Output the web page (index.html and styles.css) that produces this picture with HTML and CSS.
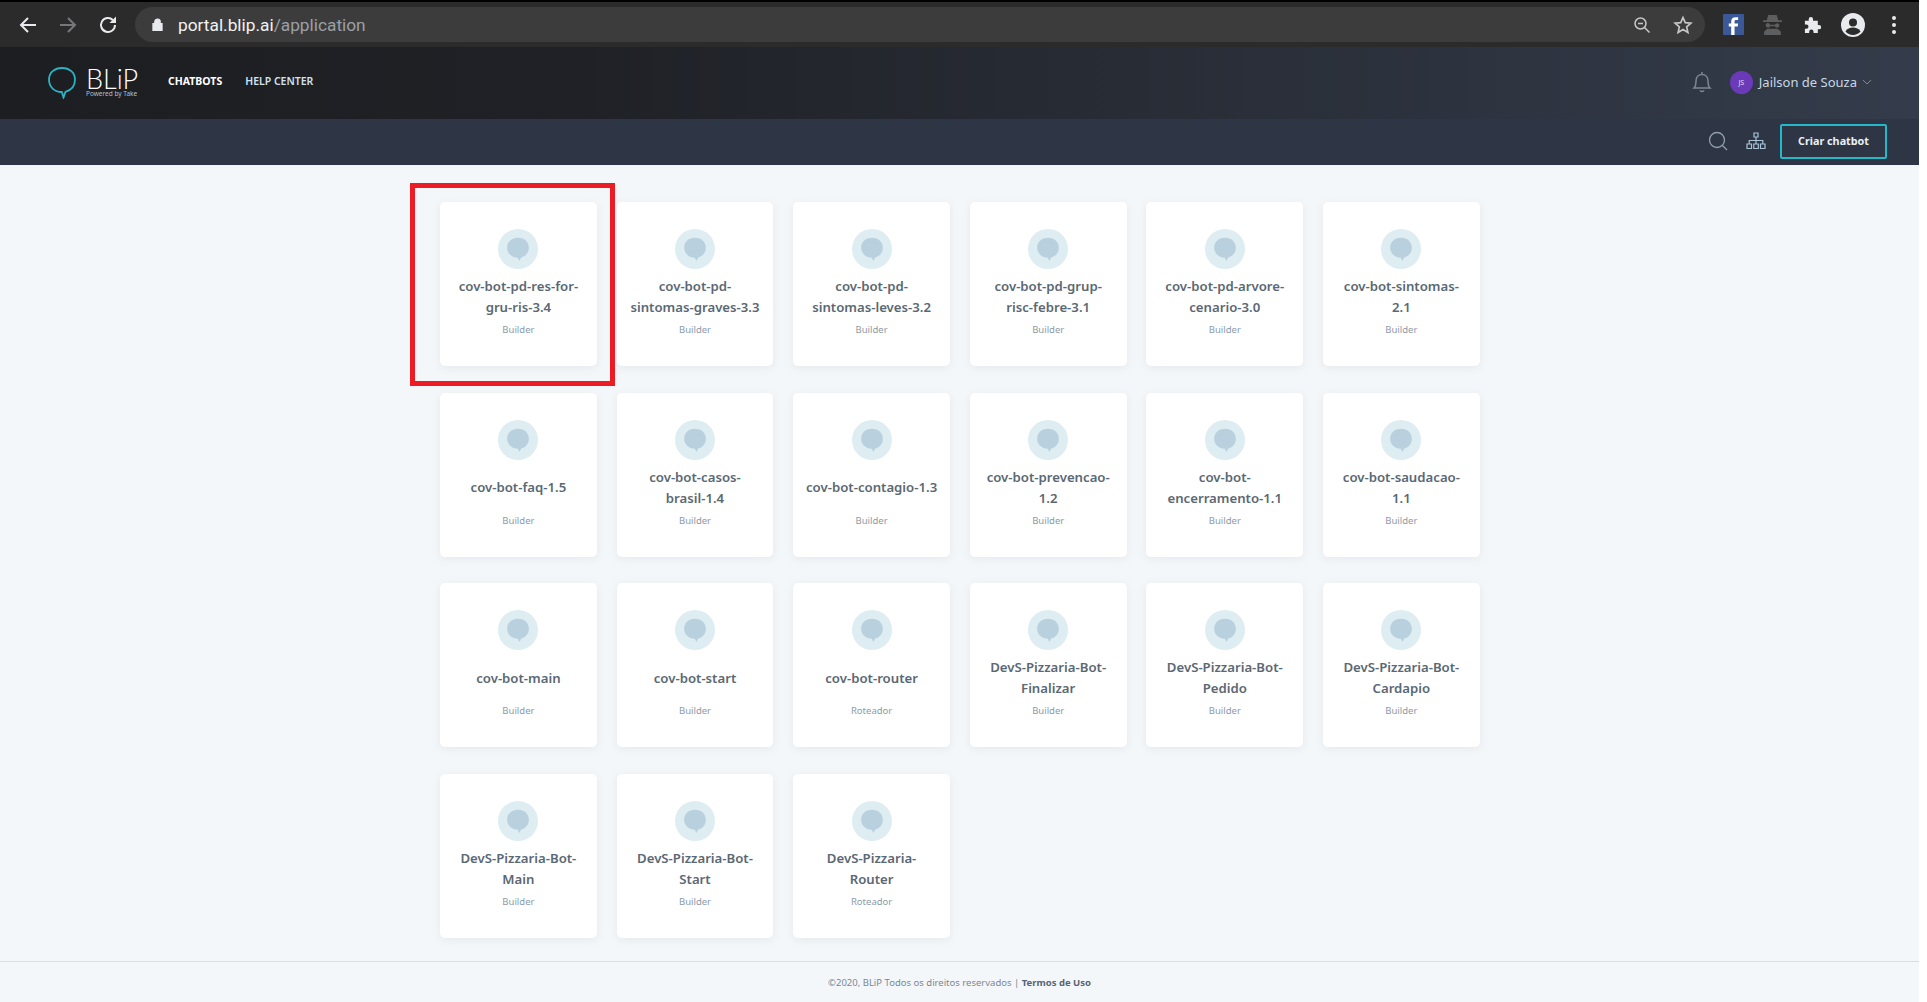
FILE: index.html
```html
<!DOCTYPE html>
<html lang="en">
<head>
    <meta charset="UTF-8">
    <title>BLiP</title>
    <link rel="stylesheet" href="styles.css">
</head>
<body>
<svg class="defs" width="0" height="0">
    <symbol id="bubble" viewBox="0 0 24 24">
        <path d="M12 1.500c5.800 0 10 3.600 10 9.300 0 4.600-2.800 7.800-7 9l-1.800 3.200-1.400-2.900C6.300 19.800 2 16.200 2 10.800 2 5.100 6.200 1.500 12 1.500z" fill="#b9d0df"/>
    </symbol>
</svg>

<div class="page">
    <div class="browser">
        <div class="browser-nav">
            <svg class="bicon" viewBox="0 0 24 24"><path d="M20 12H5M12 5l-7 7 7 7" fill="none" stroke="#e8eaed" stroke-width="2"/></svg>
            <svg class="bicon" viewBox="0 0 24 24"><path d="M4 12h15M12 5l7 7-7 7" fill="none" stroke="#75777a" stroke-width="2"/></svg>
            <svg class="bicon" viewBox="0 0 24 24"><path d="M19 12a7 7 0 1 1-2.200-5.100" fill="none" stroke="#e8eaed" stroke-width="2"/><path d="M20 3.500V10h-6.500z" fill="#e8eaed"/></svg>
        </div>
        <div class="omnibox">
            <div class="url">
                <svg class="lock" viewBox="0 0 12 14"><path d="M1 6h10v8H1zM3 6V4a3 3 0 0 1 6 0v2" fill="#e8eaed" stroke="#e8eaed" stroke-width="1.200"/></svg>
                <span class="host">portal.blip.ai</span><span class="path">/application</span>
            </div>
            <div class="omni-icons">
                <svg class="small-icon" viewBox="0 0 18 18"><circle cx="7.500" cy="7.500" r="5.500" fill="none" stroke="#c4c7c5" stroke-width="1.500"/><path d="M5 7.500h5M11.500 11.500l5 5" stroke="#c4c7c5" stroke-width="1.500"/></svg>
                <svg class="small-icon star" viewBox="0 0 24 24"><path d="M12 3l2.700 6.200 6.800.6-5.100 4.500 1.500 6.700-5.900-3.500L6.100 21l1.500-6.700-5.100-4.500 6.800-.6z" fill="none" stroke="#c4c7c5" stroke-width="2"/></svg>
            </div>
        </div>
        <div class="extensions">
            <svg class="ext fb" viewBox="0 0 20 20"><rect width="20" height="20" rx="1" fill="#3b5998"/><path d="M11 20v-8h3l.4-3H11V7.200c0-.9.300-1.400 1.500-1.400h1.900V3.200c-.4 0-1.400-.2-2.500-.2-2.500 0-4.100 1.500-4.100 4v2H5.500v3h2.300v8z" fill="#fff"/></svg>
            <svg class="ext" viewBox="0 0 20 20"><path d="M6 1h8l1.500 5H19v1.500H1V6h3.500zM5.500 8.500a2.200 2.200 0 0 1 2.200 1.800h4.600a2.200 2.200 0 0 1 4.200 0v.7a2.200 2.200 0 0 1-4.200.700H7.700a2.200 2.200 0 0 1-4.200-.7v-.7a2.200 2.200 0 0 1 2-1.800zM5 14h10l3 3v3H2v-3z" fill="#5c5e60"/></svg>
            <svg class="ext puzzle" viewBox="0 0 20 20"><path d="M2 6h4V4.500a2.300 2.300 0 0 1 4.600 0V6h5v4.500h1.200a2.300 2.300 0 0 1 0 4.600h-1.200V19h-4.500v-1.500a2.300 2.300 0 0 0-4.600 0V19H2v-4.500h1.500a2.300 2.300 0 0 0 0-4.600H2z" fill="#e8eaed"/></svg>
            <svg class="ext avatar-icon" viewBox="0 0 24 24"><circle cx="12" cy="12" r="12" fill="#e8eaed"/><circle cx="12" cy="9.500" r="4" fill="#2b2b2b"/><path d="M4.500 18.500c1.500-3 4.500-4 7.500-4s6 1 7.500 4a10 10 0 0 1-15 0z" fill="#2b2b2b"/></svg>
            <svg class="ext dots" viewBox="0 0 6 20"><circle cx="3" cy="3" r="2" fill="#e8eaed"/><circle cx="3" cy="10" r="2" fill="#e8eaed"/><circle cx="3" cy="17" r="2" fill="#e8eaed"/></svg>
        </div>
    </div>

    <header class="topnav">
        <div class="logo">
            <svg class="logo-bubble" viewBox="0 0 28 32"><path d="M14 1c7.500 0 13 4.500 13 11.500 0 7-4.500 10.800-9.500 12.300L15.500 30.500 13.800 25C6.500 25 1 20 1 12.500 1 5.500 6.500 1 14 1z" fill="none" stroke="#2cb3c4" stroke-width="1.800"/></svg>
            <div class="logo-text">
                <span class="logo-name">BLiP</span>
                <span class="logo-sub">Powered by Take</span>
            </div>
        </div>
        <a class="navlink strong">CHATBOTS</a>
        <a class="navlink">HELP CENTER</a>
        <div class="user">
            <svg class="bell" viewBox="0 0 20 22"><path d="M2 17c2-2 2-4 2-7 0-4 2.500-6.500 6-6.500s6 2.500 6 6.500c0 3 0 5 2 7zM8 19.500c.5 1.200 3.500 1.200 4 0M10 1v2.500" fill="none" stroke="#7d8793" stroke-width="1.500"/></svg>
            <span class="initials">JS</span>
            <span class="username">Jailson de Souza</span>
            <svg class="caret" viewBox="0 0 10 6"><path d="M1 1l4 4 4-4" fill="none" stroke="#7d8793"/></svg>
        </div>
    </header>

    <div class="subbar">
        <svg class="search" viewBox="0 0 20 20"><circle cx="9" cy="9" r="7.500" fill="none" stroke="#8fa0ad" stroke-width="1.300"/><path d="M14.500 14.500l4.500 4.500" stroke="#8fa0ad" stroke-width="1.300"/></svg>
        <svg class="tree" viewBox="0 0 20 18"><path d="M8 1h4v4H8zM1 12h4.500v4.500H1zM7.800 12h4.500v4.500H7.800zM14.500 12H19v4.500h-4.500zM10 5v7M3.200 12V8.500h13.600V12" fill="none" stroke="#a9c4d6" stroke-width="1.200"/></svg>
        <button class="create">Criar chatbot</button>
    </div>

    <main class="content">
        <div class="grid">
            <div class="card"><svg class="badge" viewBox="0 0 24 24"><use href="#bubble"/></svg><h3>cov-bot-pd-res-for-gru-ris-3.4</h3><p>Builder</p><div class="highlight"></div></div>
            <div class="card"><svg class="badge" viewBox="0 0 24 24"><use href="#bubble"/></svg><h3>cov-bot-pd-sintomas-graves-3.3</h3><p>Builder</p></div>
            <div class="card"><svg class="badge" viewBox="0 0 24 24"><use href="#bubble"/></svg><h3>cov-bot-pd-sintomas-leves-3.2</h3><p>Builder</p></div>
            <div class="card"><svg class="badge" viewBox="0 0 24 24"><use href="#bubble"/></svg><h3>cov-bot-pd-grup-<br>risc-febre-3.1</h3><p>Builder</p></div>
            <div class="card"><svg class="badge" viewBox="0 0 24 24"><use href="#bubble"/></svg><h3>cov-bot-pd-arvore-<br>cenario-3.0</h3><p>Builder</p></div>
            <div class="card"><svg class="badge" viewBox="0 0 24 24"><use href="#bubble"/></svg><h3>cov-bot-sintomas-<br>2.1</h3><p>Builder</p></div>

            <div class="card"><svg class="badge" viewBox="0 0 24 24"><use href="#bubble"/></svg><h3>cov-bot-faq-1.5</h3><p>Builder</p></div>
            <div class="card"><svg class="badge" viewBox="0 0 24 24"><use href="#bubble"/></svg><h3>cov-bot-casos-<br>brasil-1.4</h3><p>Builder</p></div>
            <div class="card"><svg class="badge" viewBox="0 0 24 24"><use href="#bubble"/></svg><h3>cov-bot-contagio-1.3</h3><p>Builder</p></div>
            <div class="card"><svg class="badge" viewBox="0 0 24 24"><use href="#bubble"/></svg><h3>cov-bot-prevencao-<br>1.2</h3><p>Builder</p></div>
            <div class="card"><svg class="badge" viewBox="0 0 24 24"><use href="#bubble"/></svg><h3>cov-bot-<br>encerramento-1.1</h3><p>Builder</p></div>
            <div class="card"><svg class="badge" viewBox="0 0 24 24"><use href="#bubble"/></svg><h3>cov-bot-saudacao-<br>1.1</h3><p>Builder</p></div>

            <div class="card"><svg class="badge" viewBox="0 0 24 24"><use href="#bubble"/></svg><h3>cov-bot-main</h3><p>Builder</p></div>
            <div class="card"><svg class="badge" viewBox="0 0 24 24"><use href="#bubble"/></svg><h3>cov-bot-start</h3><p>Builder</p></div>
            <div class="card"><svg class="badge" viewBox="0 0 24 24"><use href="#bubble"/></svg><h3>cov-bot-router</h3><p>Roteador</p></div>
            <div class="card"><svg class="badge" viewBox="0 0 24 24"><use href="#bubble"/></svg><h3>DevS-Pizzaria-Bot-<br>Finalizar</h3><p>Builder</p></div>
            <div class="card"><svg class="badge" viewBox="0 0 24 24"><use href="#bubble"/></svg><h3>DevS-Pizzaria-Bot-<br>Pedido</h3><p>Builder</p></div>
            <div class="card"><svg class="badge" viewBox="0 0 24 24"><use href="#bubble"/></svg><h3>DevS-Pizzaria-Bot-<br>Cardapio</h3><p>Builder</p></div>

            <div class="card"><svg class="badge" viewBox="0 0 24 24"><use href="#bubble"/></svg><h3>DevS-Pizzaria-Bot-<br>Main</h3><p>Builder</p></div>
            <div class="card"><svg class="badge" viewBox="0 0 24 24"><use href="#bubble"/></svg><h3>DevS-Pizzaria-Bot-<br>Start</h3><p>Builder</p></div>
            <div class="card"><svg class="badge" viewBox="0 0 24 24"><use href="#bubble"/></svg><h3>DevS-Pizzaria-<br>Router</h3><p>Roteador</p></div>
        </div>
    </main>

    <footer class="footer">
        ©2020, BLiP Todos os direitos reservados | <strong>Termos de Uso</strong>
    </footer>
</div>
</body>
</html>
```

FILE: styles.css
```css
* {
    box-sizing: border-box;
}

html, body {
    height: 100%;
}

body {
    margin: 0;
    background-color: #fff;
    font-family: "Noto Sans", sans-serif;
    overflow: hidden;
}

.defs {
    position: absolute;
}

.page {
    display: flex;
    flex-direction: column;
    width: 1919px;
    height: 100%;
    background-color: #f4f7f9;
}

/* browser chrome */
.browser {
    flex: none;
    display: flex;
    align-items: center;
    height: 47px;
    border-top: 2px solid #000;
    background-color: #2b2b2b;
}

.browser-nav {
    display: flex;
    gap: 16px;
    width: 135px;
    padding-left: 16px;
}

.bicon {
    width: 24px;
    height: 24px;
}

.omnibox {
    display: flex;
    align-items: center;
    justify-content: space-between;
    width: 1570px;
    height: 35px;
    padding: 0 12px 0 17px;
    border-radius: 18px;
    background-color: #3c3c3c;
}

.url {
    display: flex;
    align-items: center;
    font-family: Roboto, sans-serif;
    font-size: 17.300px;
}

.lock {
    width: 11px;
    height: 13px;
    margin-right: 15px;
}

.host {
    color: #f1f3f4;
}

.path {
    color: #9aa0a6;
}

.omni-icons {
    display: flex;
    align-items: center;
    gap: 22px;
}

.small-icon {
    width: 18px;
    height: 18px;
}

.star {
    width: 20px;
    height: 20px;
}

.extensions {
    display: flex;
    align-items: center;
    gap: 20px;
    padding-left: 18px;
}

.ext {
    width: 21px;
    height: 21px;
}

.fb {
    margin-right: -2px;
}

.puzzle {
    width: 19px;
    height: 19px;
}

.avatar-icon {
    width: 24px;
    height: 24px;
    margin-left: -1px;
}

.dots {
    width: 6px;
    height: 20px;
    margin-left: 6px;
}

/* app nav */
.topnav {
    flex: none;
    display: flex;
    align-items: center;
    height: 72px;
    padding: 0 0 4px 48px;
    background: linear-gradient(90deg, #1c1e21 0%, #1f2126 30%, #343c4b 100%);
}

.logo {
    display: flex;
    align-items: center;
    gap: 10px;
    width: 120px;
    margin-top: 4px;
}

.logo-bubble {
    width: 28px;
    height: 32px;
}

.logo-text {
    display: flex;
    flex-direction: column;
    align-items: flex-start;
    color: #fff;
}

.logo-name {
    font-family: Lato, sans-serif;
    font-size: 27px;
    font-weight: 300;
    line-height: 22px;
}

.logo-sub {
    font-size: 6.500px;
    line-height: 8px;
    color: #b9bdc2;
}

.navlink {
    margin-right: 23px;
    font-size: 10.500px;
    font-weight: 600;
    color: #cfe3f2;
}

.navlink.strong {
    font-weight: 700;
    color: #fff;
}

.user {
    display: flex;
    align-items: center;
    margin-top: 2px;
    margin-left: auto;
    padding-right: 47px;
}

.bell {
    width: 20px;
    height: 22px;
    margin-right: 18px;
}

.initials {
    display: flex;
    align-items: center;
    justify-content: center;
    width: 23px;
    height: 23px;
    margin-right: 6px;
    border-radius: 50%;
    background-color: #6a3ab8;
    color: #e6dcf5;
    font-size: 7px;
}

.username {
    font-size: 13px;
    color: #c6d8e6;
}

.caret {
    width: 10px;
    height: 6px;
    margin-left: 5px;
}

.subbar {
    flex: none;
    display: flex;
    align-items: center;
    justify-content: flex-end;
    height: 46px;
    padding: 0 32px 2px 0;
    background-color: #2e3544;
}

.search {
    width: 20px;
    height: 20px;
    margin-right: 18px;
}

.tree {
    width: 20px;
    height: 18px;
    margin-right: 14px;
}

.create {
    width: 107px;
    height: 35px;
    padding: 0 0 2px;
    border: 2px solid #22b9c8;
    border-radius: 2px;
    background-color: transparent;
    color: #e8f0f5;
    font-family: "Noto Sans", sans-serif;
    font-size: 10.800px;
    font-weight: 700;
}

/* cards */
.content {
    flex: 1;
    padding: 37px 0 0 440px;
}

.grid {
    display: grid;
    grid-template-columns: repeat(6, 156.800px);
    grid-auto-rows: 164px;
    column-gap: 19.800px;
    row-gap: 26.600px;
}

.card {
    position: relative;
    display: flex;
    flex-direction: column;
    align-items: center;
    padding: 27px 12px 0;
    border-radius: 5px;
    background-color: #fff;
    box-shadow: 0 2px 8px rgba(90, 120, 150, 0.1);
    text-align: center;
}

.badge {
    flex: none;
    width: 40px;
    height: 40px;
    padding: 7px;
    border-radius: 50%;
    background-color: #deedf2;
}

.card h3 {
    display: flex;
    align-items: center;
    justify-content: center;
    height: 42px;
    margin: 7px 0 0;
    font-size: 13.200px;
    font-weight: 600;
    line-height: 21px;
    color: #5a6873;
}

.card p {
    margin: 5px 0 0;
    font-size: 9.500px;
    line-height: 14px;
    color: #8c9aa8;
}

.highlight {
    position: absolute;
    top: -19px;
    left: -30px;
    width: 205px;
    height: 203px;
    border: 5px solid #ed1c24;
}

.footer {
    flex: none;
    height: 41px;
    padding-top: 14px;
    border-top: 1px solid #d4e0e8;
    color: #7b8894;
    font-size: 9.500px;
    text-align: center;
}

.footer strong {
    font-weight: 700;
    color: #56646f;
}
```
